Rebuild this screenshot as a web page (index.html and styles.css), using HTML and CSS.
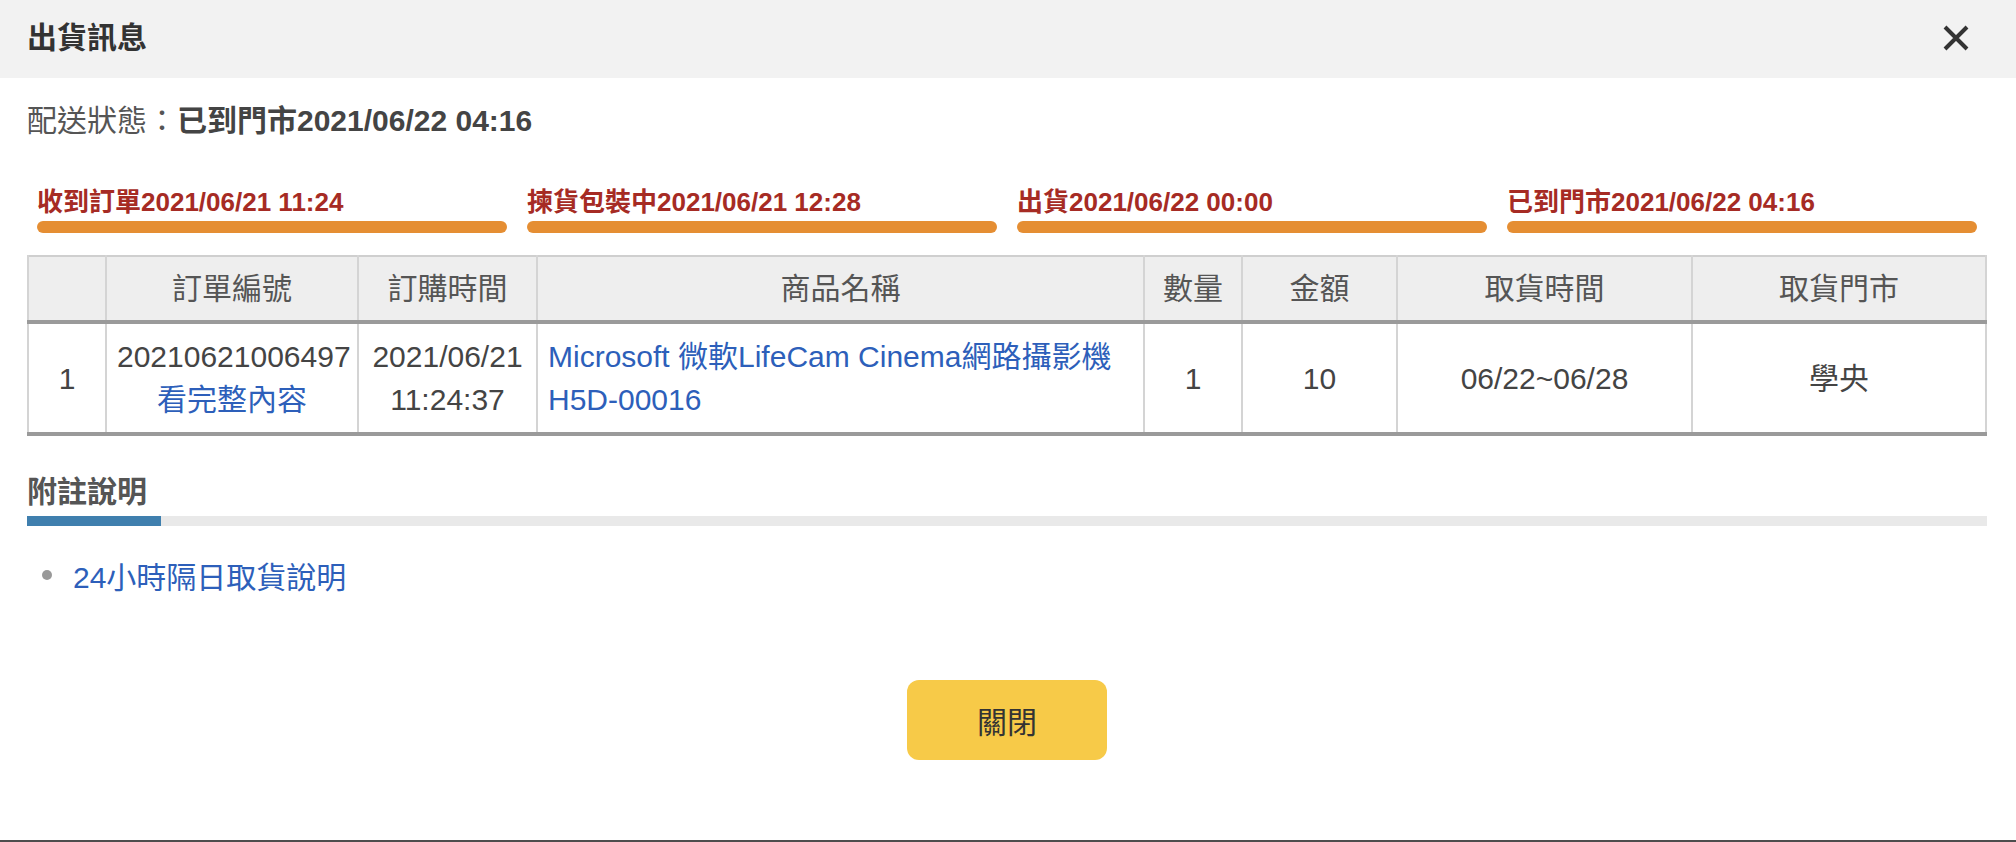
FILE: index.html
```html
<!DOCTYPE html>
<html lang="zh-Hant">
<head>
<meta charset="utf-8">
<title>出貨訊息</title>
<link rel="stylesheet" href="styles.css">
</head>
<body>
<div class="modal">
  <div class="modal-header">
    <h1 class="modal-title">出貨訊息</h1>
    <button class="close-x" aria-label="關閉">
      <svg width="26" height="26" viewBox="0 0 26 26"><path d="M2 2 L24 24 M24 2 L2 24" stroke="#333" stroke-width="4" fill="none"/></svg>
    </button>
  </div>
  <div class="modal-body">
    <p class="status"><span class="status-label">配送狀態：</span><strong class="status-value">已到門市2021/06/22 04:16</strong></p>
    <div class="steps">
      <div class="step"><div class="step-label">收到訂單2021/06/21 11:24</div><div class="step-bar"></div></div>
      <div class="step"><div class="step-label">揀貨包裝中2021/06/21 12:28</div><div class="step-bar"></div></div>
      <div class="step"><div class="step-label">出貨2021/06/22 00:00</div><div class="step-bar"></div></div>
      <div class="step"><div class="step-label">已到門市2021/06/22 04:16</div><div class="step-bar"></div></div>
    </div>
    <table class="order-table">
      <colgroup>
        <col class="c-idx"><col class="c-no"><col class="c-time"><col class="c-name"><col class="c-qty"><col class="c-amt"><col class="c-pick"><col class="c-store">
      </colgroup>
      <thead>
        <tr><th></th><th>訂單編號</th><th>訂購時間</th><th>商品名稱</th><th>數量</th><th>金額</th><th>取貨時間</th><th>取貨門市</th></tr>
      </thead>
      <tbody>
        <tr>
          <td>1</td>
          <td>20210621006497<br><a href="#">看完整內容</a></td>
          <td>2021/06/21<br>11:24:37</td>
          <td class="name"><a href="#">Microsoft 微軟LifeCam Cinema網路攝影機H5D-00016</a></td>
          <td>1</td>
          <td>10</td>
          <td>06/22~06/28</td>
          <td>學央</td>
        </tr>
      </tbody>
    </table>
    <h2 class="section-title">附註說明</h2>
    <div class="section-rule"><div class="section-rule-fill"></div></div>
    <ul class="notes"><li><a href="#">24小時隔日取貨說明</a></li></ul>
    <div class="actions"><button class="btn-close">關閉</button></div>
  </div>
</div>
<div class="page-edge"></div>
</body>
</html>
```
FILE: styles.css
```css
* { box-sizing: border-box; }
html, body { margin: 0; padding: 0; background: #fff; }
body {
  font-family: "Liberation Sans", "Noto Sans CJK TC", sans-serif;
  font-size: 30px;
  line-height: 43px;
  color: #444;
}
a { color: #2d5fba; text-decoration: none; }
.modal { height: 840px; background: #fff; }
.modal-header {
  height: 78px;
  background: #f2f2f2;
  display: flex;
  align-items: center;
  justify-content: space-between;
  padding: 0 47px 0 27px;
}
.modal-title { margin: 0; font-size: 30px; font-weight: bold; color: #333; line-height: 43px; margin-top: -4px; }
.close-x { border: 0; background: none; padding: 0; width: 26px; height: 26px; display: flex; margin-top: -2px; }
.modal-body { padding: 21px 29px 0 27px; }
.status { margin: 0; color: #555; }
.status-value { color: #444; font-weight: bold; }
.steps { display: flex; margin-top: 42px; }
.step { flex: 1; padding: 0 10px; }
.step-label { font-size: 26px; line-height: 37px; font-weight: bold; color: #a62b24; white-space: nowrap; }
.step-bar { height: 12px; border-radius: 6px; background: #e58e33; }
.order-table {
  margin-top: 22px;
  width: 1958px;
  table-layout: fixed;
  border-collapse: collapse;
  border: 2px solid #cfcfcf;
  border-bottom: 4px solid #9a9a9a;
}
.c-idx { width: 78px; }
.c-no { width: 252px; }
.c-time { width: 179px; }
.c-name { width: 607px; }
.c-qty { width: 98px; }
.c-amt { width: 155px; }
.c-pick { width: 295px; }
.c-store { width: 294px; }
.order-table th {
  background: #eeeeee;
  font-weight: normal;
  color: #555;
  padding: 10px 10px;
  border-left: 2px solid #d4d4d4;
  border-right: 2px solid #d4d4d4;
  border-bottom: 4px solid #9a9a9a;
  text-align: center;
}
.order-table td {
  padding: 11px 10px;
  border-left: 2px solid #d4d4d4;
  border-right: 2px solid #d4d4d4;
  text-align: center;
  vertical-align: middle;
  color: #444;
}
.order-table td.name { text-align: left; }
.section-title { margin: 34px 0 0; font-size: 30px; line-height: 43px; font-weight: bold; color: #555; }
.section-rule { margin-top: 3px; height: 10px; background: #e9e9e9; }
.section-rule-fill { width: 134px; height: 10px; background: #3f7fae; }
.notes { list-style: none; margin: 30px 0 0; padding: 0; }
.notes li { display: flex; align-items: center; }
.notes li::before {
  content: "";
  width: 10px; height: 10px; border-radius: 50%;
  background: #999;
  margin: -6px 21px 0 15px;
}
.actions { display: flex; justify-content: center; margin-top: 81px; }
.btn-close {
  width: 200px; height: 80px;
  border: 0; border-radius: 12px;
  background: #f7ca48;
  font-family: inherit; font-size: 30px; color: #333;
}
.page-edge { height: 2px; background: #4d4d4d; }
```
